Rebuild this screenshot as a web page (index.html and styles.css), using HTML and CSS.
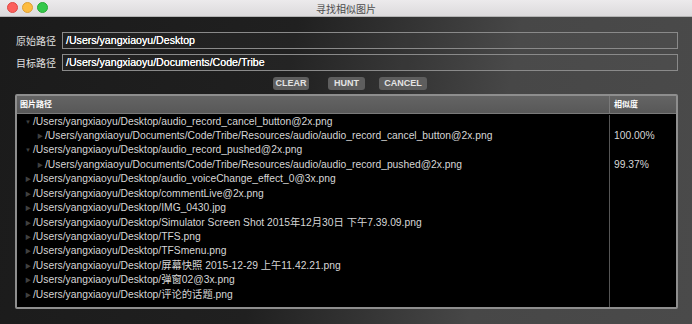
FILE: index.html
```html
<!DOCTYPE html>
<html lang="zh">
<head>
    <meta charset="UTF-8">
    <title>寻找相似图片</title>
    <link rel="stylesheet" href="styles.css">
</head>
<body>
    <div class="window">
        <div class="titlebar">
            <div class="lights">
                <span class="light red"></span>
                <span class="light yellow"></span>
                <span class="light green"></span>
            </div>
            <div class="window-title">寻找相似图片</div>
        </div>
        <div class="main">
            <div class="field">
                <div class="label">原始路径</div>
                <div class="input">/Users/yangxiaoyu/Desktop</div>
            </div>
            <div class="field">
                <div class="label">目标路径</div>
                <div class="input">/Users/yangxiaoyu/Documents/Code/Tribe</div>
            </div>
            <div class="actions">
                <div class="btn btn-clear">CLEAR</div>
                <div class="btn btn-hunt">HUNT</div>
                <div class="btn btn-cancel">CANCEL</div>
            </div>
            <div class="table">
                <div class="head">
                    <div class="col-path">图片路径</div>
                    <div class="col-score">相似度</div>
                </div>
                <div class="body">
                    <div class="row"><div class="col-path"><span class="tri">&#9660;</span>/Users/yangxiaoyu/Desktop/audio_record_cancel_button@2x.png</div><div class="col-score"></div></div>
                    <div class="row child"><div class="col-path"><span class="tri">&#9654;</span>/Users/yangxiaoyu/Documents/Code/Tribe/Resources/audio/audio_record_cancel_button@2x.png</div><div class="col-score">100.00%</div></div>
                    <div class="row"><div class="col-path"><span class="tri">&#9660;</span>/Users/yangxiaoyu/Desktop/audio_record_pushed@2x.png</div><div class="col-score"></div></div>
                    <div class="row child"><div class="col-path"><span class="tri">&#9654;</span>/Users/yangxiaoyu/Documents/Code/Tribe/Resources/audio/audio_record_pushed@2x.png</div><div class="col-score">99.37%</div></div>
                    <div class="row"><div class="col-path"><span class="tri">&#9654;</span>/Users/yangxiaoyu/Desktop/audio_voiceChange_effect_0@3x.png</div><div class="col-score"></div></div>
                    <div class="row"><div class="col-path"><span class="tri">&#9654;</span>/Users/yangxiaoyu/Desktop/commentLive@2x.png</div><div class="col-score"></div></div>
                    <div class="row"><div class="col-path"><span class="tri">&#9654;</span>/Users/yangxiaoyu/Desktop/IMG_0430.jpg</div><div class="col-score"></div></div>
                    <div class="row"><div class="col-path"><span class="tri">&#9654;</span>/Users/yangxiaoyu/Desktop/Simulator Screen Shot 2015年12月30日 下午7.39.09.png</div><div class="col-score"></div></div>
                    <div class="row"><div class="col-path"><span class="tri">&#9654;</span>/Users/yangxiaoyu/Desktop/TFS.png</div><div class="col-score"></div></div>
                    <div class="row"><div class="col-path"><span class="tri">&#9654;</span>/Users/yangxiaoyu/Desktop/TFSmenu.png</div><div class="col-score"></div></div>
                    <div class="row"><div class="col-path"><span class="tri">&#9654;</span>/Users/yangxiaoyu/Desktop/屏幕快照 2015-12-29 上午11.42.21.png</div><div class="col-score"></div></div>
                    <div class="row"><div class="col-path"><span class="tri">&#9654;</span>/Users/yangxiaoyu/Desktop/弹窗02@3x.png</div><div class="col-score"></div></div>
                    <div class="row"><div class="col-path"><span class="tri">&#9654;</span>/Users/yangxiaoyu/Desktop/评论的话题.png</div><div class="col-score"></div></div>
                    <div class="row filler"><div class="col-path"></div><div class="col-score"></div></div>
                </div>
            </div>
        </div>
    </div>
</body>
</html>
```

FILE: styles.css
```css
html, body {
    margin: 0;
    padding: 0;
    width: 692px;
    height: 324px;
    overflow: hidden;
    background: #ffffff;
}

.window {
    width: 692px;
    height: 324px;
    display: flex;
    flex-direction: column;
    font-family: "Liberation Sans", "Noto Sans CJK SC", sans-serif;
}

.titlebar {
    height: 16px;
    flex-shrink: 0;
    display: flex;
    align-items: center;
    justify-content: center;
    position: relative;
    background: linear-gradient(#eceaec, #dcdadc);
    border-bottom: 1px solid #b4b4b4;
}

.lights {
    position: absolute;
    left: 7px;
    top: 2px;
    display: flex;
    gap: 4px;
}

.light {
    width: 11px;
    height: 11px;
    border-radius: 50%;
    box-sizing: border-box;
}

.red {
    background: #fc605c;
    border: 1px solid #de4a45;
}

.yellow {
    background: #fdbc40;
    border: 1px solid #dea034;
}

.green {
    background: #34c84a;
    border: 1px solid #27aa35;
}

.window-title {
    font-size: 10px;
    color: #4c4c4c;
}

.main {
    flex: 1;
    display: flex;
    flex-direction: column;
    padding: 15px 14px 15px 15px;
    background: linear-gradient(100deg, #1b1b1b 0%, #202020 40%, #333333 55%, #474747 70%, #4a4a4a 100%);
}

.field {
    display: flex;
    align-items: center;
    height: 17px;
    margin-bottom: 5px;
}

.label {
    width: 46px;
    font-size: 10px;
    color: #e0e0e0;
    padding-left: 1px;
}

.input {
    flex: 1;
    height: 17px;
    box-sizing: border-box;
    border: 1px solid #8a8a8a;
    background: rgba(255, 255, 255, 0.02);
    color: #ffffff;
    font-size: 10.6px;
    line-height: 15px;
    padding-left: 3px;
    text-shadow: 0 0 0.3px #ffffff;
}

.actions {
    display: flex;
    margin: 1px 0 4px 0;
    padding-left: 258px;
}

.btn {
    height: 13px;
    line-height: 13px;
    border-radius: 3px;
    background: #5e5e5e;
    color: #e4e4e4;
    font-size: 9px;
    font-weight: bold;
    text-align: center;
}

.btn-clear {
    width: 36px;
}

.btn-hunt {
    width: 37px;
    margin-left: 19px;
}

.btn-cancel {
    width: 48px;
    margin-left: 14px;
}

.table {
    flex: 1;
    display: flex;
    flex-direction: column;
    border: 2px solid #8e8e8e;
    border-radius: 2px;
    background: #000000;
    overflow: hidden;
}

.head {
    display: flex;
    height: 17px;
    background: linear-gradient(#646464, #585858);
    border-bottom: 1px solid #7a7a7a;
    color: #ffffff;
    font-size: 8px;
    font-weight: bold;
    line-height: 17px;
}

.body {
    flex: 1;
    display: flex;
    flex-direction: column;
    padding-top: 0.5px;
}

.col-path {
    flex: 1;
    padding-left: 3px;
    white-space: nowrap;
    overflow: hidden;
}

.col-score {
    width: 62px;
    padding-left: 4px;
    border-left: 1px solid #555555;
}

.head .col-score {
    border-left-color: #7a7a7a;
}

.row {
    display: flex;
    height: 14.45px;
    line-height: 14.45px;
    color: #d6d6d6;
    font-size: 10.3px;
}

.row.filler {
    flex: 1;
}

.tri {
    display: inline-block;
    width: 8px;
    font-size: 6px;
    color: #404040;
    padding-left: 5px;
    vertical-align: top;
}

.row.child .tri {
    padding-left: 17px;
}
```
